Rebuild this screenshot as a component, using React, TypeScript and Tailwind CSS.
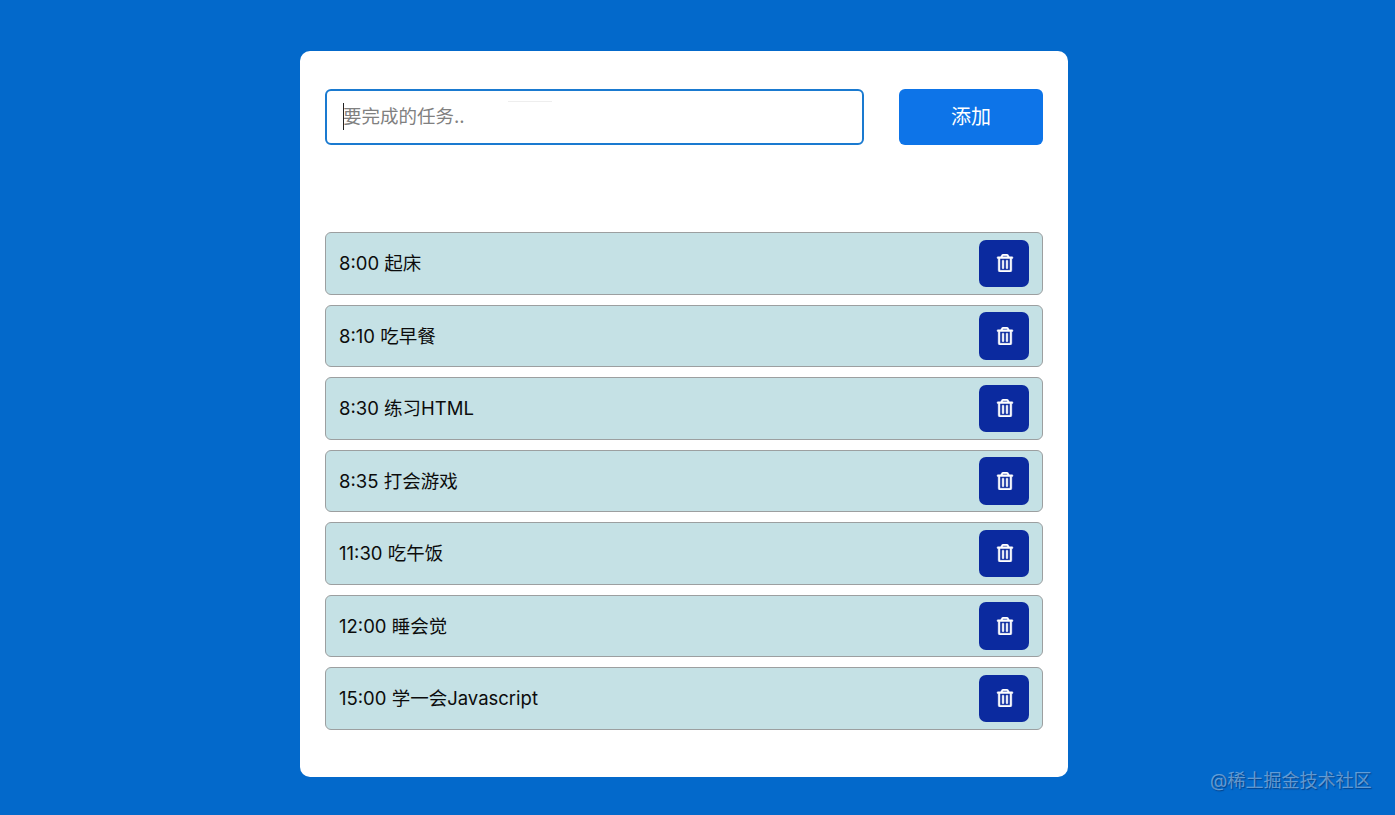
import React from "react";
import { FaRegTrashAlt } from "react-icons/fa";

const tasks = [
  "8:00 起床",
  "8:10 吃早餐",
  "8:30 练习HTML",
  "8:35 打会游戏",
  "11:30 吃午饭",
  "12:00 睡会觉",
  "15:00 学一会Javascript",
];

const fontStack = "font-['Inter','Noto_Sans_CJK_SC',sans-serif]";

export default function App() {
  return (
    <div className={`relative h-[815px] overflow-hidden bg-[#0369cb] pt-[51px] ${fontStack}`}>
      <div className="ml-[300px] h-[726px] w-[768px] rounded-[10px] bg-white px-[25px] pt-[38px]">
        {/* input row */}
        <div className="flex justify-between">
          <div className="relative">
            <input
              type="text"
              placeholder="要完成的任务.."
              className="h-[56px] w-[539px] rounded-[6px] border-2 border-[#1a7ad0] pb-[2px] pl-[16px] text-[18.5px] outline-none placeholder:text-[#808080]"
            />
            {/* text caret */}
            <span className="absolute left-[18px] top-[14px] h-[27px] w-px bg-[#222]" />
            {/* faint line inside the field */}
            <span className="absolute left-[183px] top-[12px] h-px w-[44px] bg-[#eeeeee]" />
          </div>
          <button className="h-[56px] w-[144px] rounded-[6px] bg-[#0d74e8] text-[20px] text-white">
            添加
          </button>
        </div>

        {/* task list */}
        <ul className="mt-[87px] flex flex-col gap-[10px]">
          {tasks.map((task) => (
            <li
              key={task}
              className="flex h-[62.5px] items-center justify-between rounded-[6px] border border-[#9c9fa0] bg-[#c5e1e5] pl-[13px] pr-[13px]"
            >
              <span className="pt-[2px] text-[18.5px] text-[#0c0c0c]">{task}</span>
              <button className="flex h-[47.5px] w-[50px] items-center justify-center rounded-[7px] bg-[#0b2a9f] text-white">
                <FaRegTrashAlt className="ml-px text-[18px] stroke-[14px]" />
              </button>
            </li>
          ))}
        </ul>
      </div>

      {/* watermark */}
      <span className="absolute left-[1210px] top-[770px] text-[18px] leading-[22px] text-white/40 [text-shadow:1px_1px_1px_rgba(0,30,80,0.5)]">
        @稀土掘金技术社区
      </span>
    </div>
  );
}
